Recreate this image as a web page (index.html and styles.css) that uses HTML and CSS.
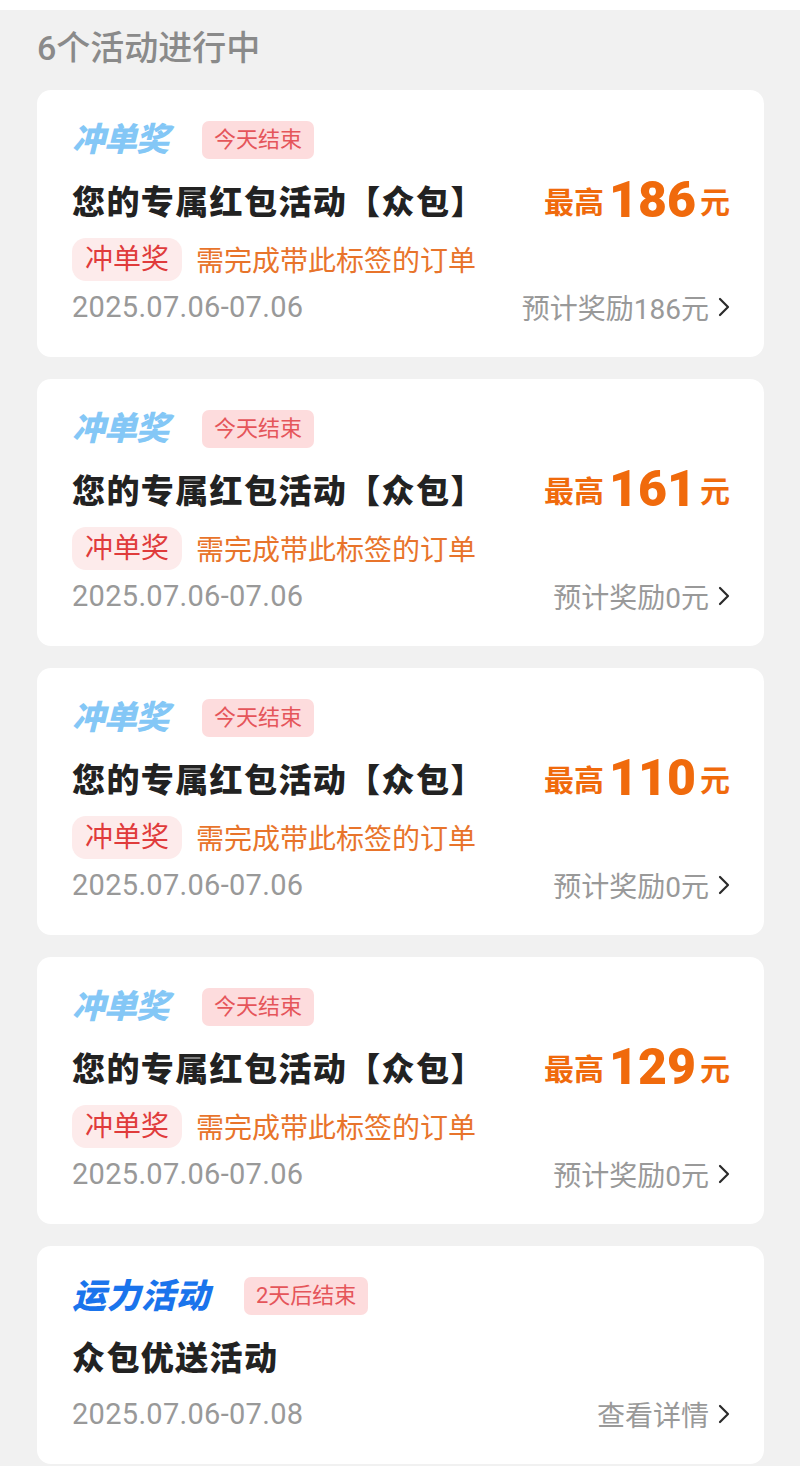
FILE: index.html
```html
<!DOCTYPE html>
<html lang="zh-CN">

<head>
    <meta charset="utf-8">
    <meta name="viewport" content="width=device-width,initial-scale=1">
    <title>活动列表</title>
    <link rel="stylesheet" href="styles.css">
</head>

<body>
    <div class="topbar"></div>
    <div class="page">
        <h1 class="count">6个活动进行中</h1>

        <div class="card">
            <div class="card-head">
                <span class="logo logo-light">冲单奖</span>
                <span class="badge">今天结束</span>
            </div>
            <div class="title-row">
                <div class="title">您的专属红包活动【众包】</div>
                <div class="price"><span class="unit">最高</span><b>186</b><span class="unit">元</span></div>
            </div>
            <div class="req">
                <span class="pill">冲单奖</span>
                <span class="req-text">需完成带此标签的订单</span>
            </div>
            <div class="meta">
                <span class="date">2025.07.06-07.06</span>
                <span class="more">预计奖励186元<svg class="chev" width="12" height="20" viewBox="0 0 12 20"><polyline points="2,2 10,10 2,18" /></svg></span>
            </div>
        </div>

        <div class="card">
            <div class="card-head">
                <span class="logo logo-light">冲单奖</span>
                <span class="badge">今天结束</span>
            </div>
            <div class="title-row">
                <div class="title">您的专属红包活动【众包】</div>
                <div class="price"><span class="unit">最高</span><b>161</b><span class="unit">元</span></div>
            </div>
            <div class="req">
                <span class="pill">冲单奖</span>
                <span class="req-text">需完成带此标签的订单</span>
            </div>
            <div class="meta">
                <span class="date">2025.07.06-07.06</span>
                <span class="more">预计奖励0元<svg class="chev" width="12" height="20" viewBox="0 0 12 20"><polyline points="2,2 10,10 2,18" /></svg></span>
            </div>
        </div>

        <div class="card">
            <div class="card-head">
                <span class="logo logo-light">冲单奖</span>
                <span class="badge">今天结束</span>
            </div>
            <div class="title-row">
                <div class="title">您的专属红包活动【众包】</div>
                <div class="price"><span class="unit">最高</span><b>110</b><span class="unit">元</span></div>
            </div>
            <div class="req">
                <span class="pill">冲单奖</span>
                <span class="req-text">需完成带此标签的订单</span>
            </div>
            <div class="meta">
                <span class="date">2025.07.06-07.06</span>
                <span class="more">预计奖励0元<svg class="chev" width="12" height="20" viewBox="0 0 12 20"><polyline points="2,2 10,10 2,18" /></svg></span>
            </div>
        </div>

        <div class="card">
            <div class="card-head">
                <span class="logo logo-light">冲单奖</span>
                <span class="badge">今天结束</span>
            </div>
            <div class="title-row">
                <div class="title">您的专属红包活动【众包】</div>
                <div class="price"><span class="unit">最高</span><b>129</b><span class="unit">元</span></div>
            </div>
            <div class="req">
                <span class="pill">冲单奖</span>
                <span class="req-text">需完成带此标签的订单</span>
            </div>
            <div class="meta">
                <span class="date">2025.07.06-07.06</span>
                <span class="more">预计奖励0元<svg class="chev" width="12" height="20" viewBox="0 0 12 20"><polyline points="2,2 10,10 2,18" /></svg></span>
            </div>
        </div>

        <div class="card card-short">
            <div class="card-head">
                <span class="logo logo-blue">运力活动</span>
                <span class="badge">2天后结束</span>
            </div>
            <div class="title-row">
                <div class="title">众包优送活动</div>
            </div>
            <div class="meta">
                <span class="date">2025.07.06-07.08</span>
                <span class="more">查看详情<svg class="chev" width="12" height="20" viewBox="0 0 12 20"><polyline points="2,2 10,10 2,18" /></svg></span>
            </div>
        </div>
    </div>
</body>

</html>
```

FILE: styles.css
```css
* {
    margin: 0px;
    padding: 0px;
    box-sizing: border-box;
}

body {
    font-family: Roboto, "Noto Sans CJK SC", "Noto Sans", sans-serif;
    background: #f1f1f1;
    color: #222;
}

.topbar {
    height: 10px;
    background: #fff;
}

.page {
    padding: 0 36px 0 37px;
}

.count {
    height: 80px;
    line-height: 76px;
    font-size: 34px;
    font-weight: 500;
    color: #8a8a8a;
}

.card {
    background: #fff;
    border-radius: 14px;
    padding: 31px 34px 32px 35px;
    margin-bottom: 22px;
}

.card-head {
    display: flex;
    align-items: center;
    height: 38px;
}

.logo {
    font-size: 33px;
    font-weight: 900;
    font-style: italic;
    line-height: 38px;
    margin-right: 34px;
    letter-spacing: -1px;
}

.logo-light {
    color: #84c7f6;
}

.logo-blue {
    color: #1a74ec;
    font-size: 34px;
    letter-spacing: 0.5px;
}

.badge {
    height: 38px;
    line-height: 38px;
    padding: 0 12px;
    border-radius: 7px;
    background: #fddcdd;
    color: #e5555a;
    font-size: 22px;
}

.title-row {
    display: flex;
    justify-content: space-between;
    align-items: center;
    height: 44px;
    margin-top: 19px;
}

.title {
    font-size: 33px;
    font-weight: 900;
    color: #222;
    letter-spacing: 1.4px;
}

.price {
    color: #f06a0c;
    font-size: 30px;
    font-weight: 700;
    white-space: nowrap;
}

.price .unit {
    vertical-align: 4px;
}

.price b {
    font-size: 50px;
    margin: 0 4px 0 5px;
}

.req {
    display: flex;
    align-items: center;
    margin-top: 15px;
    height: 44px;
}

.pill {
    height: 43px;
    line-height: 43px;
    padding: 0 13px;
    border-radius: 14px;
    background: #fdebeb;
    color: #e03b3b;
    font-size: 28px;
    margin-right: 14px;
}

.req-text {
    color: #e8742b;
    font-size: 28px;
}

.meta {
    display: flex;
    justify-content: space-between;
    align-items: center;
    height: 36px;
    margin-top: 8px;
}

.card-short .meta {
    margin-top: 18px;
}

.date {
    font-size: 29px;
    color: #999;
    letter-spacing: 0.3px;
}

.more {
    display: flex;
    align-items: center;
    font-size: 28px;
    color: #999;
}

.chev {
    margin-left: 9px;
    fill: none;
    stroke: #2a2a2a;
    stroke-width: 2.2;
    stroke-linecap: round;
    stroke-linejoin: round;
}
```
